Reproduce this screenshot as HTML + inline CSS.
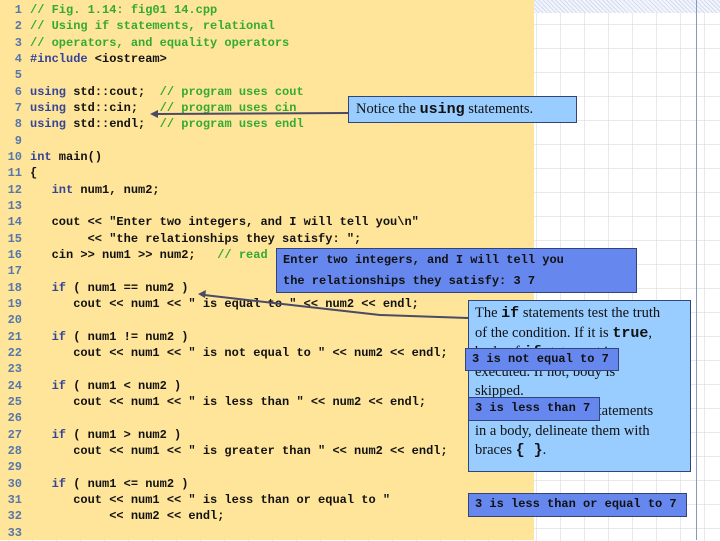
<!DOCTYPE html>
<html><head><meta charset="utf-8"><style>
body{margin:0;width:720px;height:540px;overflow:hidden;position:relative;background:#fff;
background-image:linear-gradient(90deg,rgba(210,210,220,.5) 1px,transparent 1px),linear-gradient(rgba(210,210,220,.5) 1px,transparent 1px);background-size:24px 24px;background-position:8px 0,0 0;}
#hatch{position:absolute;left:534px;top:0;width:186px;height:13px;background:repeating-linear-gradient(45deg,#d4dcf0 0 1px,#f2f5fc 1px 3px);}
#vl{position:absolute;left:696px;top:0;width:1px;height:540px;background:#8899bb;}
#code{position:absolute;left:0;top:0;width:534px;height:540px;background:#ffe599;}
.l{position:absolute;left:0;height:16px;font:bold 12px/16px "Liberation Mono",monospace;color:#111;white-space:pre;}
.n{display:inline-block;width:22px;text-align:right;color:#5577aa;margin-right:8px}
.c{color:#33aa33}.k{color:#334499}
.box{position:absolute;border:1px solid #334477;box-sizing:border-box;}
.lb{background:#99ccff;font:14.5px/19.6px "Liberation Serif",serif;color:#111;padding:2px 6px;white-space:nowrap}
.ob{background:#6688ee;font:bold 12px/20px "Liberation Mono",monospace;color:#111;padding:0 6px;white-space:pre}
b.m{font-family:"Liberation Mono",monospace;font-size:15px}
</style></head><body>
<div id="code"></div>
<div id="hatch"></div><div id="vl"></div>
<div class="l" style="top:2px"><span class="n">1</span><span class="c">// Fig. 1.14: fig01 14.cpp</span></div>
<div class="l" style="top:18.3px"><span class="n">2</span><span class="c">// Using if statements, relational</span></div>
<div class="l" style="top:34.7px"><span class="n">3</span><span class="c">// operators, and equality operators</span></div>
<div class="l" style="top:51px"><span class="n">4</span><span class="k">#include</span> &lt;iostream&gt;</div>
<div class="l" style="top:67.4px"><span class="n">5</span></div>
<div class="l" style="top:83.7px"><span class="n">6</span><span class="k">using</span> std::cout;  <span class="c">// program uses cout</span></div>
<div class="l" style="top:100px"><span class="n">7</span><span class="k">using</span> std::cin;   <span class="c">// program uses cin</span></div>
<div class="l" style="top:116.4px"><span class="n">8</span><span class="k">using</span> std::endl;  <span class="c">// program uses endl</span></div>
<div class="l" style="top:132.7px"><span class="n">9</span></div>
<div class="l" style="top:149px"><span class="n">10</span><span class="k">int</span> main()</div>
<div class="l" style="top:165.4px"><span class="n">11</span>{</div>
<div class="l" style="top:181.7px"><span class="n">12</span>   <span class="k">int</span> num1, num2;</div>
<div class="l" style="top:198px"><span class="n">13</span></div>
<div class="l" style="top:214.4px"><span class="n">14</span>   cout &lt;&lt; "Enter two integers, and I will tell you\n"</div>
<div class="l" style="top:230.7px"><span class="n">15</span>        &lt;&lt; "the relationships they satisfy: ";</div>
<div class="l" style="top:247px"><span class="n">16</span>   cin &gt;&gt; num1 &gt;&gt; num2;   <span class="c">// read two integers</span></div>
<div class="l" style="top:263.4px"><span class="n">17</span></div>
<div class="l" style="top:279.7px"><span class="n">18</span>   <span class="k">if</span> ( num1 == num2 )</div>
<div class="l" style="top:296px"><span class="n">19</span>      cout &lt;&lt; num1 &lt;&lt; " is equal to " &lt;&lt; num2 &lt;&lt; endl;</div>
<div class="l" style="top:312.4px"><span class="n">20</span></div>
<div class="l" style="top:328.7px"><span class="n">21</span>   <span class="k">if</span> ( num1 != num2 )</div>
<div class="l" style="top:345px"><span class="n">22</span>      cout &lt;&lt; num1 &lt;&lt; " is not equal to " &lt;&lt; num2 &lt;&lt; endl;</div>
<div class="l" style="top:361.4px"><span class="n">23</span></div>
<div class="l" style="top:377.7px"><span class="n">24</span>   <span class="k">if</span> ( num1 &lt; num2 )</div>
<div class="l" style="top:394px"><span class="n">25</span>      cout &lt;&lt; num1 &lt;&lt; " is less than " &lt;&lt; num2 &lt;&lt; endl;</div>
<div class="l" style="top:410.4px"><span class="n">26</span></div>
<div class="l" style="top:426.7px"><span class="n">27</span>   <span class="k">if</span> ( num1 &gt; num2 )</div>
<div class="l" style="top:443px"><span class="n">28</span>      cout &lt;&lt; num1 &lt;&lt; " is greater than " &lt;&lt; num2 &lt;&lt; endl;</div>
<div class="l" style="top:459.4px"><span class="n">29</span></div>
<div class="l" style="top:475.7px"><span class="n">30</span>   <span class="k">if</span> ( num1 &lt;= num2 )</div>
<div class="l" style="top:492px"><span class="n">31</span>      cout &lt;&lt; num1 &lt;&lt; " is less than or equal to "</div>
<div class="l" style="top:508.4px"><span class="n">32</span>           &lt;&lt; num2 &lt;&lt; endl;</div>
<div class="l" style="top:524.7px"><span class="n">33</span></div>

<svg style="position:absolute;left:0;top:0" width="720" height="540">
<line x1="348" y1="113" x2="156" y2="114" stroke="#4a4a66" stroke-width="2"/>
<polygon points="150,114 158,110 158,118" fill="#4a4a66"/>
<polyline points="468,318 380,315 300,306 204,295" fill="none" stroke="#4a4a66" stroke-width="2"/>
<polygon points="198,294 206,290 205,298" fill="#4a4a66"/>
</svg>

<div class="box lb" style="left:348px;top:96px;width:229px;height:27px;padding:3px 7px">Notice the <b class="m">using</b> statements.</div>
<div class="box ob" style="left:276px;top:248px;width:361px;height:45px;line-height:21px;padding:1px 6px">Enter two integers, and I will tell you
the relationships they satisfy: 3 7</div>
<div class="box lb" style="left:468px;top:300px;width:223px;height:172px;padding:3px 6px">The <b class="m">if</b> statements test the truth<br>of the condition.  If it is <b class="m">true</b>,<br>body of <b class="m">if</b> statement is<br>executed.  If not, body is<br>skipped.<br>To include multiple statements<br>in a body, delineate them with<br>braces <b class="m">{ }</b>.</div>
<div class="box ob" style="left:465px;top:348px;width:154px;height:23px">3 is not equal to 7</div>
<div class="box ob" style="left:468px;top:397px;width:132px;height:24px">3 is less than 7</div>
<div class="box ob" style="left:468px;top:493px;width:219px;height:24px">3 is less than or equal to 7</div>
</body></html>
